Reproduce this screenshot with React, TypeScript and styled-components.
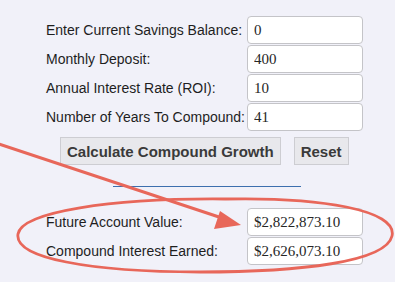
import styled, { createGlobalStyle } from "styled-components";

const GlobalStyle = createGlobalStyle`
    html, body {
        margin: 0;
        padding: 0;
        background: #f1f1f9;
    }
`;

const fields = [
    { label: "Enter Current Savings Balance:", value: "0" },
    { label: "Monthly Deposit:", value: "400" },
    { label: "Annual Interest Rate (ROI):", value: "10" },
    { label: "Number of Years To Compound:", value: "41" },
];

const results = [
    { label: "Future Account Value:", value: "$2,822,873.10" },
    { label: "Compound Interest Earned:", value: "$2,626,073.10" },
];

const Annotation = () => (
    <Overlay viewBox="0 0 395 282" width="395" height="282">
        <line x1="-4" y1="143" x2="222" y2="218" stroke="#e8675a" strokeWidth="3" strokeLinecap="round" />
        <polygon points="241,225 214,229 220,211" fill="#e8675a" />
        <path
            d="M 225 199 C 320 197, 398 210, 392 236 C 386 262, 300 272, 200 272 C 90 272, 14 258, 18 234 C 22 212, 110 198, 225 199"
            fill="none"
            stroke="#e8675a"
            strokeWidth="2.8"
        />
    </Overlay>
);

export default function App() {
    return (
        <Page>
            <GlobalStyle />
            <FieldGrid>
                {fields.map((f) => (
                    <Row key={f.label}>
                        <Label>{f.label}</Label>
                        <Field defaultValue={f.value} />
                    </Row>
                ))}
            </FieldGrid>
            <Buttons>
                <Button>Calculate Compound Growth</Button>
                <Button>Reset</Button>
            </Buttons>
            <Divider />
            <FieldGrid>
                {results.map((r) => (
                    <Row key={r.label}>
                        <Label>{r.label}</Label>
                        <Field defaultValue={r.value} readOnly />
                    </Row>
                ))}
            </FieldGrid>
            <Annotation />
        </Page>
    );
}

const Page = styled.div`
    position: relative;
    width: 395px;
    height: 282px;
    box-sizing: border-box;
    padding: 16px 0 0 46px;
    overflow: hidden;
    font-family: "Liberation Sans", Arial, sans-serif;
`;

const FieldGrid = styled.div`
    display: flex;
    flex-direction: column;
    gap: 1px;
`;

const Row = styled.div`
    display: grid;
    grid-template-columns: 201px 116px;
    align-items: center;
    height: 28px;
`;

const Label = styled.span`
    font-size: 14px;
    color: #1e1e1e;
    white-space: nowrap;
`;

const Field = styled.input`
    box-sizing: border-box;
    width: 116px;
    height: 28px;
    margin: 0;
    padding: 0 6px;
    border: 1px solid #c4c4c8;
    border-radius: 4px;
    background: #fff;
    font-family: "Liberation Serif", "Times New Roman", serif;
    font-size: 15px;
    color: #262626;
    outline: none;
`;

const Buttons = styled.div`
    display: flex;
    gap: 13px;
    margin: 6px 0 0 14px;
`;

const Button = styled.button`
    height: 28px;
    padding: 0 6px;
    border: 1px solid #cdcdd2;
    border-radius: 0;
    background: #e8e8ec;
    font-family: "Liberation Sans", Arial, sans-serif;
    font-weight: bold;
    font-size: 15px;
    color: #3a3a3a;
`;

const Divider = styled.div`
    width: 188px;
    height: 0;
    margin: 21px 0 21px 67px;
    border-top: 1px solid #3d6fae;
`;

const Overlay = styled.svg`
    position: absolute;
    left: 0;
    top: 0;
    pointer-events: none;
`;
